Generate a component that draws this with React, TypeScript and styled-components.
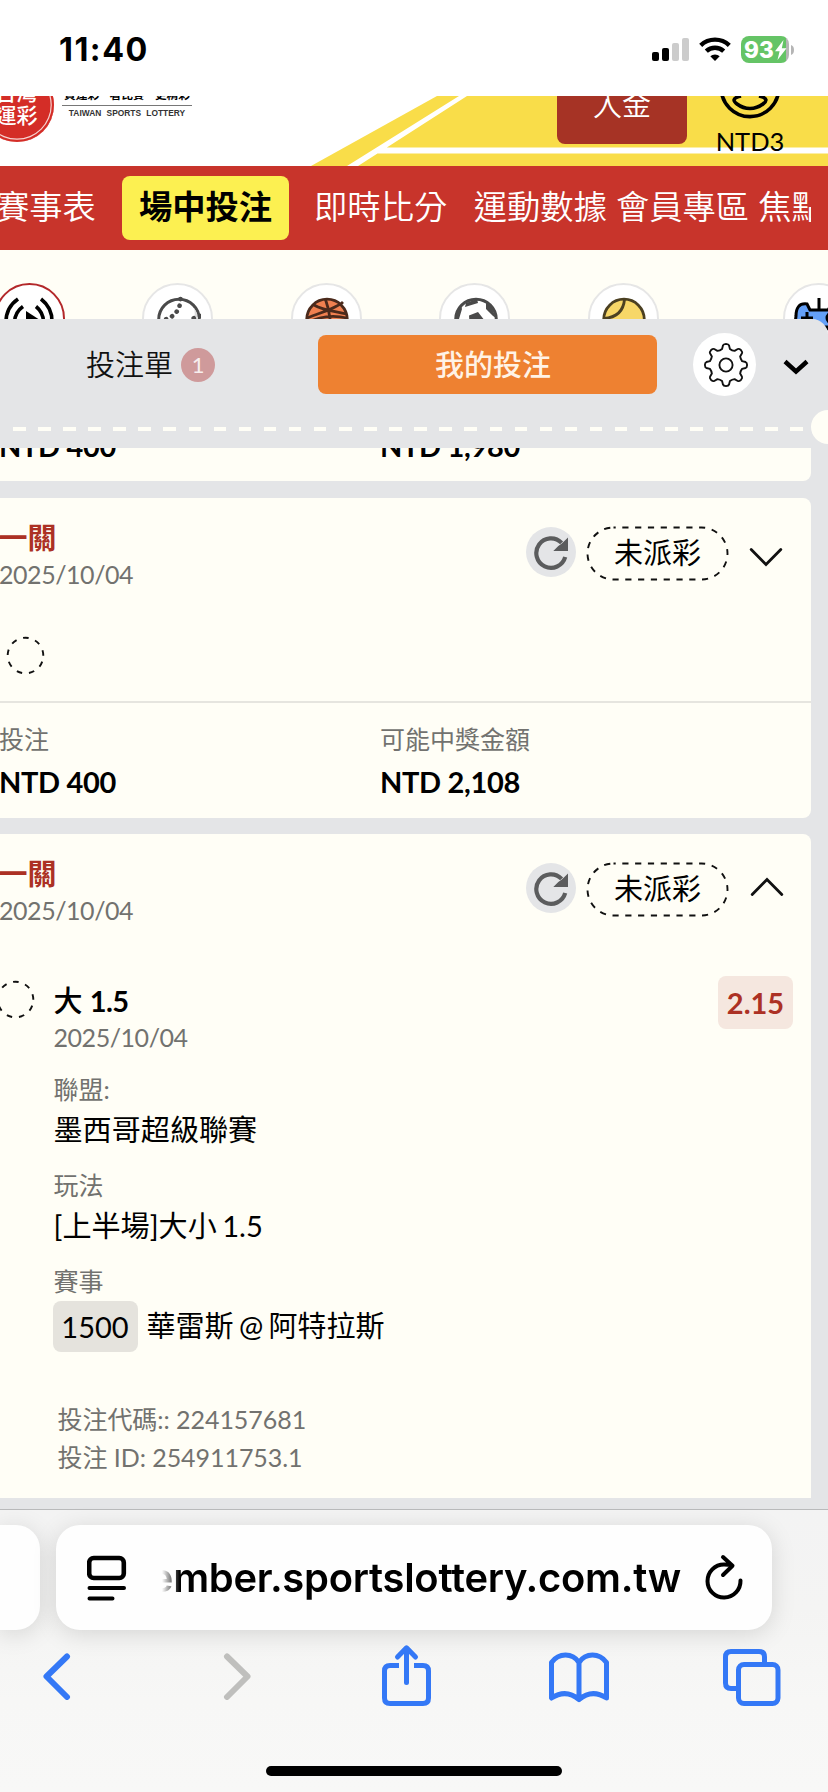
import React from "react";
import styled, { createGlobalStyle } from "styled-components";

const Global = createGlobalStyle`
  *, *::before, *::after { box-sizing: border-box; }
  html, body { margin: 0; padding: 0; background: #fffef6; }
  body { font-family: Lato, "Noto Sans CJK TC", sans-serif; color: #000; }
  svg { display: block; flex: none; }
`;

const Screen = styled.div`
  width: 828px;
  height: 1792px;
  overflow: hidden;
  display: flex;
  flex-direction: column;
  background: #fffef6;
`;

/* ---------- status bar ---------- */
const StatusBar = styled.div`
  height: 96px;
  flex: none;
  background: #fff;
  display: flex;
  justify-content: space-between;
  padding: 32px 32px 0 59px;
`;
const Clock = styled.div`
  font: 700 32.3px/36px Inter, sans-serif;
  letter-spacing: 1.5px;
`;
const StatusIcons = styled.div`
  display: flex;
  align-items: flex-start;
  padding-top: 4px;
`;
const Battery = styled.div`
  display: flex;
  align-items: center;
  margin-left: 10px;
`;
const BatteryBody = styled.div`
  width: 48px;
  height: 27px;
  border-radius: 8px;
  background: linear-gradient(90deg, #65c466 0 45px, #b5b5b5 45px);
  display: flex;
  align-items: center;
  padding-left: 3px;
  color: #fff;
  font: 800 22.5px/27px Inter, sans-serif;
`;
const BatteryTip = styled.svg`
  margin-left: 2px;
`;
const Wifi = styled.svg`
  margin-left: 9px;
`;

/* ---------- site header ---------- */
const Header = styled.header`
  position: relative;
  height: 70px;
  flex: none;
  overflow: hidden;
  background: #fff;
  display: flex;
`;
const Stripes = styled.svg`
  position: absolute;
  inset: 0;
`;
const Seal = styled.div`
  width: 74px;
  height: 74px;
  flex: none;
  margin: -28px 0 0 -20.5px;
  border-radius: 50%;
  background: #d42d27;
  box-shadow: inset 0 0 0 2.2px #d42d27, inset 0 0 0 3.4px #f6d3d1;
  color: #fff;
  font-weight: 500;
  font-size: 21px;
  line-height: 23px;
  text-align: center;
  padding-top: 12px;
`;
const Slogan = styled.div`
  width: 130px;
  flex: none;
  margin: -11px 0 0 8.5px;
  text-align: center;
  white-space: nowrap;
`;
const SloganTop = styled.div`
  display: flex;
  justify-content: space-between;
  padding: 0 2px;
  font-weight: 700;
  font-size: 11.7px;
  line-height: 19px;
  height: 21px;
  border-bottom: 1px solid #777;
`;
const SloganSub = styled.div`
  font: 700 8.4px/14px "Liberation Sans", sans-serif;
  word-spacing: 3px;
  color: #333;
`;
const Deposit = styled.button`
  position: relative;
  width: 130px;
  height: 78px;
  flex: none;
  margin: -30px 0 0 365px;
  border: 0;
  border-radius: 8px;
  background: #a63325;
  color: #fff;
  font: 350 29px/40px Lato, "Noto Sans CJK TC", sans-serif;
  padding: 0;
`;
const Account = styled.div`
  position: relative;
  display: flex;
  flex-direction: column;
  align-items: center;
  width: 66px;
  margin-left: 30px;
`;
const Balance = styled.div`
  font-size: 25.5px;
  line-height: 30px;
  margin-top: 7px;
`;

/* ---------- navigation ---------- */
const Nav = styled.nav`
  height: 84px;
  flex: none;
  background: #c8342b;
  padding: 10px 17px 0 0;
  display: flex;
  overflow: hidden;
`;
const NavTrack = styled.div`
  display: flex;
  width: 811px;
  overflow: hidden;
`;
const NavItem = styled.div<{ $active?: boolean; $gap?: number }>`
  flex: none;
  height: 64px;
  line-height: 61px;
  font-size: 33.3px;
  font-weight: ${(p) => (p.$active ? 700 : 350)};
  color: ${(p) => (p.$active ? "#000" : "#fff")};
  background: ${(p) => (p.$active ? "#fcf051" : "transparent")};
  border-radius: 8px;
  padding: ${(p) => (p.$active ? "0 17px" : "0")};
  margin-left: ${(p) => p.$gap ?? 0}px;
`;

/* ---------- sports row ---------- */
const SportsRow = styled.div`
  height: 69px;
  flex: none;
  padding: 33px 0 0;
  display: flex;
  margin-left: -6.5px;
  width: 860px;
`;
const SportCircle = styled.div<{ $active?: boolean; $gap?: number }>`
  width: 71px;
  height: 71px;
  flex: none;
  border-radius: 50%;
  background: #fff;
  border: 2px solid ${(p) => (p.$active ? "#b3282a" : "#e6e6e6")};
  margin-left: ${(p) => p.$gap ?? 77.5}px;
  display: flex;
  justify-content: center;
  padding-top: 11px;
`;

/* ---------- bet slip sheet ---------- */
const Sheet = styled.main`
  position: relative;
  height: 1190px;
  flex: none;
  display: flex;
  flex-direction: column;
  background: #e4e5e7;
  border-top-right-radius: 16px;
  overflow: hidden;
  padding-bottom: 11px;
`;
const Tabs = styled.div`
  height: 91px;
  flex: none;
  display: flex;
  align-items: center;
`;
const SlipTab = styled.div`
  width: 318px;
  display: flex;
  align-items: center;
  padding-left: 86px;
  font-size: 29px;
  line-height: 40px;
  font-weight: 350;
  color: #111;
`;
const Count = styled.span`
  width: 34px;
  height: 34px;
  border-radius: 50%;
  background: #cf9a9b;
  color: #f7eeee;
  font-size: 22px;
  font-weight: 400;
  line-height: 34px;
  text-align: center;
  margin-left: 8px;
`;
const MineTab = styled.div`
  width: 339px;
  height: 59px;
  border-radius: 8px;
  background: #ee8131;
  color: #fff3e6;
  font-size: 29px;
  font-weight: 500;
  line-height: 59px;
  text-align: center;
  padding-left: 11px;
`;
const GearButton = styled.div`
  width: 63px;
  height: 63px;
  border-radius: 50%;
  background: #fff;
  margin: 0 27px 0 36px;
  display: flex;
  align-items: center;
  justify-content: center;
  padding-left: 2px;
`;
const Collapse = styled.svg`
  margin-top: 4px;
`;
const Perforation = styled.div`
  height: 38px;
  flex: none;
  display: flex;
  justify-content: space-between;
  overflow: hidden;
`;
const Dashes = styled.div`
  width: 803px;
  height: 4px;
  margin-top: 17px;
  background: repeating-linear-gradient(90deg, #fffef6 0 12.5px, transparent 12.5px 25.08px);
  background-position: -12.08px 0;
  background-size: 1003.2px 4px;
`;
const Notch = styled.div`
  width: 34px;
  height: 34px;
  flex: none;
  border-radius: 50%;
  background: #fffef6;
  margin-right: -17px;
`;
const List = styled.div`
  flex: 1;
  min-height: 0;
  overflow: hidden;
  width: 811px;
  display: flex;
  flex-direction: column;
`;
const Card = styled.section<{ $height: number; $top?: number; $square?: boolean; $clipped?: boolean }>`
  height: ${(p) => p.$height}px;
  margin-top: ${(p) => p.$top ?? 0}px;
  flex: none;
  background: #fffef6;
  border-radius: ${(p) => (p.$clipped ? "0 0 8px 0" : p.$square ? "0 8px 0 0" : "0 8px 8px 0")};
`;
const Head = styled.div`
  height: 124px;
  display: flex;
  align-items: flex-start;
`;
const HeadText = styled.div`
  flex: 1;
  padding-top: 22px;
`;
const Combo = styled.div`
  font-size: 29px;
  line-height: 36px;
  font-weight: 700;
  color: #ac3124;
  margin-left: -1.5px;
`;
const Muted = styled.div<{ $height?: number }>`
  font-size: 25px;
  height: ${(p) => p.$height ?? 36}px;
  line-height: ${(p) => (p.$height ?? 36) - 2}px;
  font-weight: 400;
  color: #72726f;
`;
const DateLine = styled(Muted)<{ $shift?: number }>`
  letter-spacing: -0.45px;
  margin-left: ${(p) => p.$shift ?? 0}px;
`;
const RefreshButton = styled.div`
  width: 50px;
  height: 50px;
  border-radius: 50%;
  background: #e4e5e7;
  margin: 28.5px 10.5px 0 0;
  display: flex;
  align-items: center;
  justify-content: center;
`;
const Pill = styled.div`
  position: relative;
  width: 143px;
  height: 55px;
  margin-top: 28px;
  font-size: 29px;
  font-weight: 400;
  line-height: 54px;
  text-align: center;
`;
const Outline = styled.svg`
  position: absolute;
  inset: 0;
`;
const CardChevron = styled.svg<{ $up?: boolean }>`
  width: 34px;
  height: 20px;
  margin: ${(p) => (p.$up ? "43px 27px 0 21px" : "49px 28px 0 20px")};
`;
const LegRow = styled.div`
  height: 79px;
  padding: 14px 0 0 6px;
`;
const Totals = styled.div`
  display: flex;
  border-top: 2px solid #e6e5df;
  padding-top: 19px;
`;
const TotalCol = styled.div<{ $w?: number }>`
  width: ${(p) => (p.$w ? p.$w + "px" : "auto")};
  margin-left: -1px;
`;
const Amount = styled.div`
  font-size: 29px;
  line-height: 36px;
  font-weight: 700;
  letter-spacing: -0.33px;
  margin-top: 5.5px;
  white-space: nowrap;
`;
const ClippedRow = styled.div`
  display: flex;
  margin-top: -26px;
  height: 40px;
`;
const Clipper = styled.div`
  overflow: hidden;
  height: 33px;
`;
const Detail = styled.div`
  display: flex;
  align-items: flex-start;
`;
const LegMark = styled.div`
  width: 35px;
  flex: none;
  padding-top: 22px;
  display: flex;
  justify-content: flex-end;
`;
const DetailText = styled.div`
  flex: 1;
  padding: 24.5px 0 0 18.5px;
`;
const Pick = styled.div`
  font-size: 29px;
  height: 37.5px;
  line-height: 36px;
  font-weight: 500;
`;
const Line = styled.span`
  font-weight: 700;
  letter-spacing: -0.6px;
`;
const Odds = styled.div`
  width: 75px;
  height: 53px;
  margin: 17.5px 18px 0 0;
  border-radius: 8px;
  background: #f5e7df;
  color: #ac3124;
  font-size: 29px;
  line-height: 53px;
  font-weight: 700;
  text-align: center;
`;
const Field = styled.div<{ $top: number }>`
  margin-top: ${(p) => p.$top}px;
`;
const Value = styled.div`
  font-size: 29.1px;
  line-height: 39px;
  height: 40px;
  font-weight: 400;
  word-spacing: -2px;
`;
const Match = styled.div`
  display: flex;
  align-items: center;
  height: 51px;
  margin-top: -1px;
  font-size: 29px;
  line-height: 48px;
  word-spacing: -2px;
`;
const MatchNo = styled.span`
  width: 85px;
  height: 51px;
  margin: 0 9px 0 -1px;
  border-radius: 8px;
  background: #e5e3dd;
  line-height: 52px;
  text-align: center;
`;
const Codes = styled.div`
  padding: 49px 0 0 4px;
  letter-spacing: -0.05px;
`;

/* ---------- browser toolbar ---------- */
const Toolbar = styled.footer`
  position: relative;
  height: 283px;
  flex: none;
  border-top: 1px solid #b9babb;
  background: linear-gradient(180deg, #f3f3f3 0, #f4f4f3 100px, #f7f7f6 190px, #f8f8f7 100%);
  display: flex;
  flex-direction: column;
  align-items: center;
`;
const AddressRow = styled.div`
  display: flex;
  gap: 16px;
  width: 828px;
  margin-top: 15px;
`;
const AddressBar = styled.div<{ $w: number; $stub?: boolean }>`
  width: ${(p) => p.$w}px;
  height: 105px;
  flex: none;
  background: #fefefe;
  border-radius: ${(p) => (p.$stub ? "0 24px 24px 0" : "24px")};
  box-shadow: 0 4px 24px rgba(0, 0, 0, 0.13);
  display: flex;
  align-items: center;
`;
const PageMenu = styled.svg`
  margin-left: 31px;
`;
const Reload = styled.svg`
  margin-left: 23px;
`;
const Url = styled.div`
  width: 519px;
  margin: 0 0 0 35px;
  display: flex;
  justify-content: flex-end;
  overflow: hidden;
  white-space: nowrap;
  font: 600 39.9px/50px Inter, sans-serif;
  letter-spacing: -0.25px;
  mask-image: linear-gradient(90deg, transparent 0, #000 18px);
`;
const Actions = styled.div`
  display: flex;
  width: 828px;
  padding: 8px 0 0 43px;
  height: 136px;
`;
const Action = styled.svg<{ $gap?: number }>`
  margin-left: ${(p) => p.$gap ?? 0}px;
  fill: none;
  stroke: #3478f6;
  stroke-width: 5;
  stroke-linecap: round;
  stroke-linejoin: round;
`;
const HomeIndicator = styled.div`
  width: 296px;
  height: 10px;
  border-radius: 5px;
  background: #000;
`;

const DashedCircle = () => (
  <svg width="39" height="39" viewBox="0 0 39 39" fill="none">
    <circle cx="19.5" cy="19.5" r="17.8" stroke="#111" strokeWidth="1.9" strokeDasharray="5.6 6.83" strokeDashoffset="-3.2" transform="rotate(10 19.5 19.5)" />
  </svg>
);

const RefreshGlyph = () => (
  <svg width="36" height="36" viewBox="0 0 36 36" fill="none">
    <path d="M32.200 23A14.700 14.700 0 1 1 28.600 8.900" stroke="#5b5c5d" strokeWidth="4.200" />
    <path d="M35 3.500V17H20.300l5-5 3.500-2.500Z" fill="#5b5c5d" />
  </svg>
);

const CardHead = ({ open }: { open?: boolean }) => (
  <Head>
    <HeadText>
      <Combo>一關</Combo>
      <DateLine $height={38} $shift={-1}>2025/10/04</DateLine>
    </HeadText>
    <RefreshButton>
      <RefreshGlyph />
    </RefreshButton>
    <Pill>
      <Outline width="143" height="55" viewBox="0 0 143 55" fill="none">
        <rect x="1.5" y="1.5" width="140" height="52" rx="26" stroke="#111" strokeWidth="1.9" strokeDasharray="6.2 6.6" strokeDashoffset="4" />
      </Outline>
      未派彩
    </Pill>
    <CardChevron $up={open} viewBox="0 0 34 20" fill="none" stroke="#111" strokeWidth="2.8" strokeLinecap="round">
      {open ? <path d="M2.2 17.6 17 2.5l14.8 15.1" /> : <path d="M2.2 2.4 17 17.5 31.8 2.4" />}
    </CardChevron>
  </Head>
);

const LiveIcon = () => (
  <svg width="52" height="52" viewBox="0 0 52 52" fill="none" stroke="#000" strokeWidth="3.6">
    <path d="M15 3A28 28 0 0 0 3 26M38 3a28 28 0 0 1 11 23M20 10.500A20 20 0 0 0 11.500 26M33 10.500A20 20 0 0 1 40.500 26" />
    <path d="M23 15v22l17-11Z" fill="#000" stroke="none" />
  </svg>
);
const BaseballIcon = () => (
  <svg width="46" height="46" viewBox="0 0 46 46" fill="none">
    <circle cx="24" cy="23.500" r="20.300" fill="#fff" stroke="#4a4a4a" strokeWidth="3" />
    <path d="M39 12a19 19 0 0 1 4 12h-4c1-5 1-8 0-12Z" fill="#ddd" />
    <path d="M25.500 3c0 12-8 19-17 21M45 20c-9 2-15 8-17 18" stroke="#4a4a4a" strokeWidth="4.600" strokeLinecap="round" strokeDasharray="0.100 6.500" />
  </svg>
);
const BasketballIcon = () => (
  <svg width="46" height="46" viewBox="0 0 46 46" fill="none" stroke="#4b2a1c" strokeWidth="2.800">
    <circle cx="24" cy="23.500" r="20.300" fill="#f08050" />
    <path d="M22.500 3.500c4 11 6 24 5 40M4 22c10-4 30-10 36-16M11 9c8 5 18 6 33 9M4 27c13-7 27-8 40-5" />
  </svg>
);
const SoccerIcon = () => (
  <svg width="46" height="46" viewBox="0 0 46 46" fill="none">
    <circle cx="24" cy="23.500" r="20.300" fill="#fff" stroke="#4a4a4a" strokeWidth="3" />
    <path d="m17 19.500 9-3.500 7 9-5 9H18ZM14 7l11-4 1 4-13 4ZM34 6l6 6 4 10-3-2-7-7ZM3 24c0-6 2-10 6-14l1 3-3 10Z" fill="#4a4a4a" />
  </svg>
);
const TennisIcon = () => (
  <svg width="46" height="46" viewBox="0 0 46 46" fill="none" stroke="#4b4022" strokeWidth="2.800">
    <circle cx="24" cy="23.500" r="20.300" fill="#f7d768" />
    <path d="M24.500 3.500c-1 11-8 18-20.500 19M44 25c-9 0-15 7-17 18" />
  </svg>
);
const GamepadIcon = () => (
  <svg width="50" height="46" viewBox="0 0 50 46" fill="none" stroke="#000" strokeWidth="3">
    <path d="M13 8c-8-1-11 4-11 12-1 8-2 15-1 20 3 6 9 4 13-4l4-5h15l4 5c4 8 10 10 13 4 1-5 0-12-1-20 0-8-3-13-11-12l-4 6H16Z" fill="#64a0f8" />
    <path d="M25 2v12M13 16v12M7 22h12" />
    <circle cx="38" cy="22" r="5" fill="#64a0f8" />
  </svg>
);

/* Eight-tooth cog outline: curved valleys between slightly flared teeth. */
const gearPath = (() => {
  const at = (angle: number, r: number) =>
    `${(22 + Math.cos(angle) * r).toFixed(2)} ${(22 + Math.sin(angle) * r).toFixed(2)}`;
  let d = "";
  for (let i = 0; i < 8; i++) {
    const a = (i * Math.PI) / 4 - Math.PI / 2;
    d += `${i === 0 ? "M" : "L"}${at(a - 0.24, 15.8)}L${at(a - 0.15, 19)}Q${at(a - 0.12, 20.2)} ${at(a, 20.2)}Q${at(a + 0.12, 20.2)} ${at(a + 0.15, 19)}L${at(a + 0.24, 15.8)}Q${at(a + Math.PI / 8, 15)} ${at(a + Math.PI / 4 - 0.24, 15.8)}`;
  }
  return d + "Z";
})();

export default function App() {
  return (
    <Screen lang="zh-TW">
      <Global />
      <StatusBar>
        <Clock>11:40</Clock>
        <StatusIcons>
          <svg width="38" height="25" viewBox="0 0 38 25">
            <rect x="0" y="16" width="7" height="9" rx="2" />
            <rect x="10" y="12" width="7" height="13" rx="2" />
            <rect x="20" y="7" width="7" height="18" rx="2" fill="#ccc" />
            <rect x="30" y="2" width="7" height="23" rx="2" fill="#ccc" />
          </svg>
          <Wifi width="32" height="25" viewBox="0 0 32 25" fill="none" stroke="#000" strokeWidth="4.400">
            <path d="M1.700 9.300a20.800 20.800 0 0 1 28.600 0M7.300 15.200a12.500 12.500 0 0 1 17.400 0" />
            <path d="m16 25-4.700-4.700a6.800 6.800 0 0 1 9.400 0Z" fill="#000" stroke="none" />
          </Wifi>
          <Battery>
            <BatteryBody>
              93
              <svg width="13" height="20" viewBox="0 0 13 20" fill="#fff">
                <path d="M9.500 0 1 11.300h4.600L3.500 20 12.500 8.300H7.800Z" />
              </svg>
            </BatteryBody>
            <BatteryTip width="5" height="10" viewBox="0 0 5 10">
              <path d="M0 0c4 1 4 9 0 10Z" fill="#b5b5b5" />
            </BatteryTip>
          </Battery>
        </StatusIcons>
      </StatusBar>

      <Header>
        <Stripes width="828" height="70" viewBox="0 0 828 70">
          <path d="M311 70 437 0h391v70Z" fill="#f9dd49" />
          <path d="M347 70 459 0h8L358 70ZM376 57.500l9-6h443v6Z" fill="#fff" />
        </Stripes>
        <Seal>
          台灣
          <br />
          運彩
        </Seal>
        <Slogan>
          <SloganTop>
            <span>買運彩</span>
            <span>看比賽</span>
            <span>更精彩</span>
          </SloganTop>
          <SloganSub>TAIWAN SPORTS LOTTERY</SloganSub>
        </Slogan>
        <Deposit>入金</Deposit>
        <Account>
          <svg width="62" height="23" viewBox="0 0 62 23" fill="none" stroke="#000" strokeWidth="3.600">
            <circle cx="31" cy="-8.200" r="28.800" />
            <path d="M22 0C13 2 14 5 18 8c8 6 18 6 26 0 4-3 5-6-4-8" />
          </svg>
          <Balance>NTD3</Balance>
        </Account>
      </Header>

      <Nav>
        <NavTrack>
          <NavItem $gap={-4}>賽事表</NavItem>
          <NavItem $active $gap={26}>場中投注</NavItem>
          <NavItem $gap={25}>即時比分</NavItem>
          <NavItem $gap={26.5}>運動數據</NavItem>
          <NavItem $gap={9}>會員專區</NavItem>
          <NavItem $gap={9}>焦點</NavItem>
        </NavTrack>
      </Nav>

      <SportsRow>
        <SportCircle $active $gap={0}><LiveIcon /></SportCircle>
        <SportCircle><BaseballIcon /></SportCircle>
        <SportCircle><BasketballIcon /></SportCircle>
        <SportCircle><SoccerIcon /></SportCircle>
        <SportCircle><TennisIcon /></SportCircle>
        <SportCircle $gap={124.5}><GamepadIcon /></SportCircle>
      </SportsRow>

      <Sheet>
        <Tabs>
          <SlipTab>
            投注單<Count>1</Count>
          </SlipTab>
          <MineTab>我的投注</MineTab>
          <GearButton>
            <svg width="46" height="46" viewBox="0 0 44 44" fill="none" stroke="#111" strokeWidth="1.800" strokeLinejoin="round">
              <path d={gearPath} />
              <circle cx="22" cy="22" r="6.300" />
            </svg>
          </GearButton>
          <Collapse width="26" height="16" viewBox="0 0 26 16" fill="none" stroke="#000" strokeWidth="4.400">
            <path d="m2 2.500 11 10 11-10" />
          </Collapse>
        </Tabs>
        <Perforation>
          <Dashes />
          <Notch />
        </Perforation>
        <List>
          <Card $height={33} $clipped>
            <Clipper>
              <ClippedRow>
                <TotalCol $w={382}><Amount>NTD 400</Amount></TotalCol>
                <TotalCol><Amount>NTD 1,980</Amount></TotalCol>
              </ClippedRow>
            </Clipper>
          </Card>

          <Card $height={320} $top={17}>
            <CardHead />
            <LegRow><DashedCircle /></LegRow>
            <Totals>
              <TotalCol $w={382}>
                <Muted>投注</Muted>
                <Amount>NTD 400</Amount>
              </TotalCol>
              <TotalCol>
                <Muted>可能中獎金額</Muted>
                <Amount>NTD 2,108</Amount>
              </TotalCol>
            </Totals>
          </Card>

          <Card $height={664} $top={16} $square>
            <CardHead open />
            <Detail>
              <LegMark><DashedCircle /></LegMark>
              <DetailText>
                <Pick>大 <Line>1.5</Line></Pick>
                <DateLine $height={37}>2025/10/04</DateLine>
                <Field $top={12.5}>
                  <Muted $height={40}>聯盟:</Muted>
                  <Value>墨西哥超級聯賽</Value>
                </Field>
                <Field $top={16}>
                  <Muted $height={40}>玩法</Muted>
                  <Value>[上半場]大小 1.5</Value>
                </Field>
                <Field $top={16}>
                  <Muted $height={40}>賽事</Muted>
                  <Match>
                    <MatchNo>1500</MatchNo>華雷斯 @ 阿特拉斯
                  </Match>
                </Field>
                <Codes>
                  <Muted $height={38}>投注代碼:: 224157681</Muted>
                  <Muted $height={38}>投注 ID: 254911753.1</Muted>
                </Codes>
              </DetailText>
              <Odds>2.15</Odds>
            </Detail>
          </Card>
        </List>
      </Sheet>

      <Toolbar>
        <AddressRow>
          <AddressBar $w={40} $stub />
          <AddressBar $w={716}>
            <PageMenu width="40" height="46" viewBox="0 0 40 46" fill="none" stroke="#000" strokeWidth="4" strokeLinecap="round">
              <rect x="2.200" y="3" width="34.600" height="20" rx="4.500" strokeWidth="4.600" />
              <path d="M2.500 33h34.500M2.500 43.500h23" />
            </PageMenu>
            <Url>ember.sportslottery.com.tw</Url>
            <Reload width="40" height="48" viewBox="0 0 40 48" fill="none" stroke="#000" strokeWidth="4" strokeLinecap="round" strokeLinejoin="round">
              <path d="M36.500 26.500A16.500 16.500 0 1 1 20 10.500q4.500 0 8.500 1.200M19 3l9.500 8.700-9.500 9.300" />
            </Reload>
          </AddressBar>
        </AddressRow>
        <Actions>
          <Action width="28" height="62" viewBox="0 0 28 62">
            <path d="M24 18.500 3.500 38.500 24 59" strokeWidth="6" />
          </Action>
          <Action $gap={152} width="28" height="62" viewBox="0 0 28 62">
            <path d="M4 18.500 24.500 38.500 4 59" strokeWidth="6" stroke="#bfbfbd" />
          </Action>
          <Action $gap={131} width="49" height="68" viewBox="0 0 49 68">
            <path d="M17 27.500H8q-5.500 0-5.500 5.500v27q0 5.500 5.500 5.500h33q5.500 0 5.500-5.500V33q0-5.500-5.500-5.500h-9" strokeLinecap="butt" />
            <path d="M24.500 44.500V10M15.500 19l9-9.200 9 9.200" />
          </Action>
          <Action $gap={118} width="60" height="68" viewBox="0 0 60 68">
            <path d="M30 24.500v37Q17 50.500 2.500 60V24.500Q8 17 16.500 17T30 24.500Q35 17 43.500 17T57.500 24.500V60Q43 50.500 30 61.500" />
          </Action>
          <Action $gap={114} width="58" height="68" viewBox="0 0 58 68">
            <path d="M14 50.500H8q-5.500 0-5.500-5.500V19q0-5.500 5.500-5.500h28q5.500 0 5.500 5.500v7.500" strokeLinecap="butt" />
            <rect x="15.500" y="26.500" width="39.500" height="39" rx="5.500" />
          </Action>
        </Actions>
        <HomeIndicator />
      </Toolbar>
    </Screen>
  );
}
